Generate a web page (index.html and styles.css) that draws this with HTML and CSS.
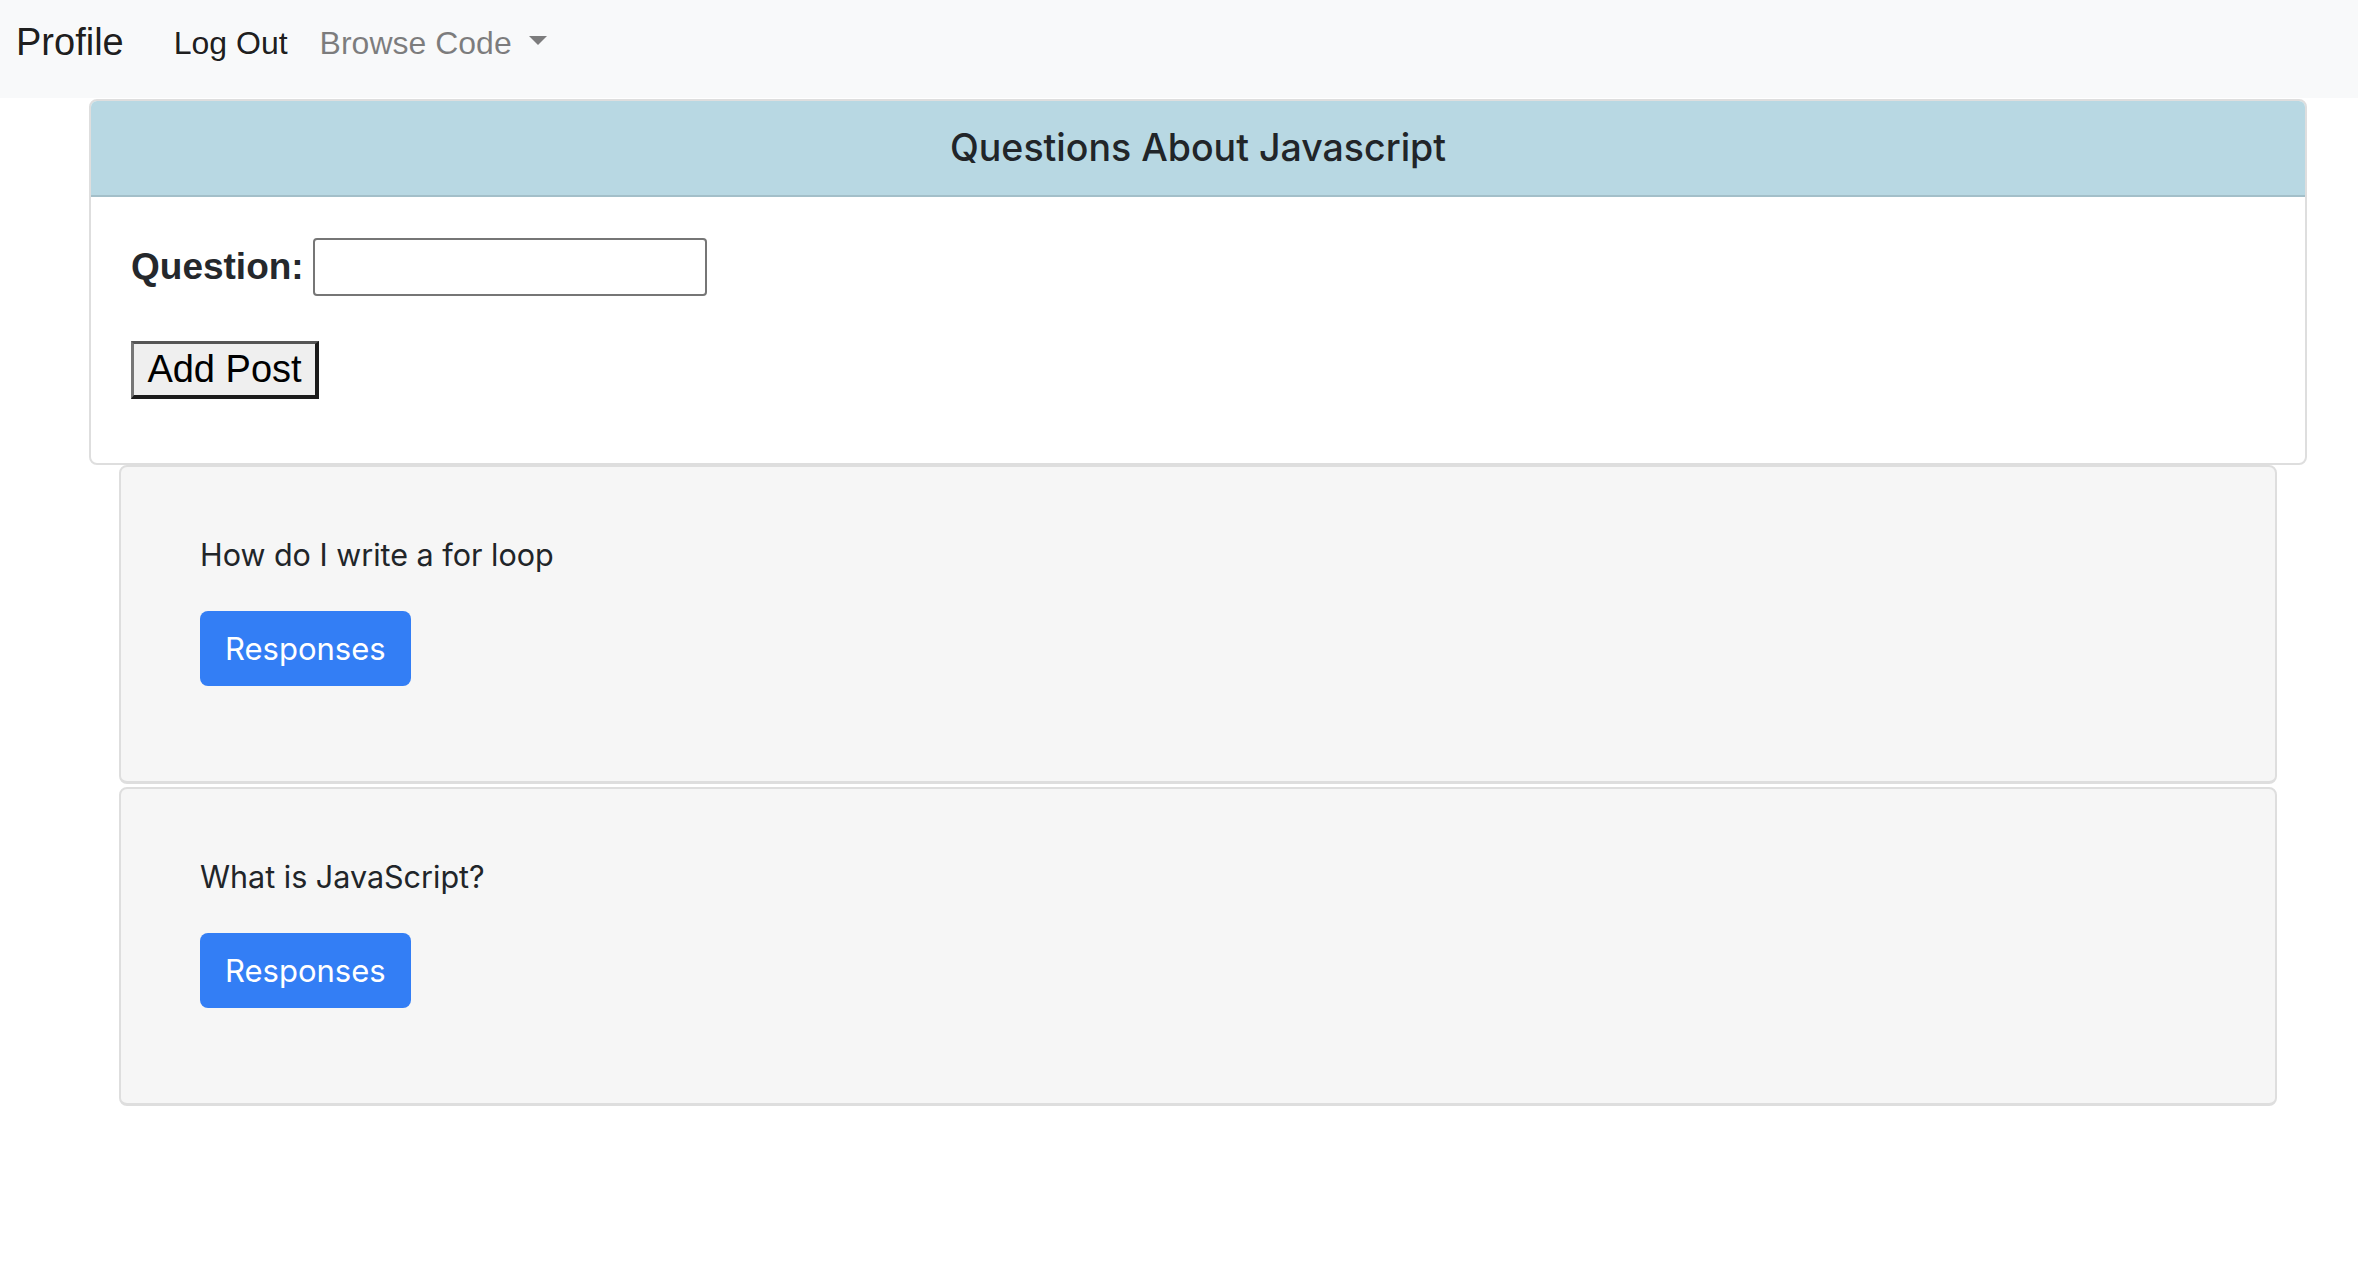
FILE: index.html
```html
<!DOCTYPE html>
<html lang="en">
<head>
<meta charset="utf-8">
<title>Questions About Javascript</title>
<link rel="stylesheet" href="styles.css">
</head>
<body>
<nav class="navbar">
  <a class="brand" href="#">Profile</a>
  <ul class="nav">
    <li><a class="nav-link nav-link-active" href="#">Log Out</a></li>
    <li><a class="nav-link nav-link-muted" href="#">Browse Code<span class="caret"></span></a></li>
  </ul>
</nav>
<main class="page">
  <section class="card">
    <div class="card-header">
      <h5 class="card-title">Questions About Javascript</h5>
    </div>
    <form class="card-body">
      <div class="field">
        <label class="field-label" for="q">Question:</label>
        <input class="field-input" id="q" type="text">
      </div>
      <button class="add-btn" type="button">Add Post</button>
    </form>
  </section>
  <div class="posts">
    <article class="post">
      <p class="post-text">How do I write a for loop</p>
      <button class="btn-primary" type="button">Responses</button>
    </article>
    <article class="post">
      <p class="post-text">What is JavaScript?</p>
      <button class="btn-primary" type="button">Responses</button>
    </article>
  </div>
</main>
</body>
</html>
```
FILE: styles.css
```css
* { box-sizing: border-box; }
html, body { margin: 0; padding: 0; background: #fff; }
body { font-family: "Inter", "Liberation Sans", sans-serif; color: #212529; }

.navbar {
  display: flex;
  align-items: center;
  height: 98px;
  padding: 0 16px 13px 16px;
  background: #f8f9fa;
}
.brand {
  font-family: "Liberation Sans", Arial, sans-serif;
  font-size: 38px;
  line-height: 57px;
  color: rgba(0,0,0,0.9);
  text-decoration: none;
  margin-right: 34px;
}
.nav { display: flex; list-style: none; margin: 0; padding: 0; }
.nav-link {
  display: flex;
  align-items: center;
  font-family: "Liberation Sans", Arial, sans-serif;
  font-size: 32px;
  line-height: 48px;
  padding: 0 16px;
  text-decoration: none;
}
.nav-link-active { color: rgba(0,0,0,0.9); }
.nav-link-muted { color: rgba(0,0,0,0.5); }
.caret {
  display: inline-block;
  margin-left: 17px;
  margin-top: -4px;
  width: 0; height: 0;
  border-top: 9px solid rgba(0,0,0,0.5);
  border-left: 9px solid transparent;
  border-right: 9px solid transparent;
}

.page { margin: 1px 0 0 89px; width: 2218px; }

.card {
  border: 2px solid #dedede;
  border-radius: 8px;
  overflow: hidden;
  background: #fff;
}
.card-header {
  background: #b8d8e3;
  border-bottom: 2px solid #a3bfc9;
  height: 96px;
  display: flex;
  align-items: center;
  justify-content: center;
}
.card-title {
  margin: 0;
  font-family: "Inter", sans-serif;
  font-weight: 500;
  font-size: 37.5px;
  line-height: 46px;
  color: #212529;
}
.card-body { padding: 41px 40px 64px 40px; }
.field { display: flex; align-items: center; }
.field-label {
  font-family: "Liberation Sans", Arial, sans-serif;
  font-weight: bold;
  font-size: 37px;
  color: #25282c;
  margin-right: 9px;
}
.field-input {
  width: 394px;
  height: 58px;
  border: 2px solid #767676;
  border-radius: 4px;
  background: #fff;
  font-size: 32px;
  padding: 2px 4px;
}
.add-btn {
  display: block;
  margin-top: 45px;
  width: 188px;
  height: 58px;
  padding: 0;
  background: #efefef;
  border-style: solid;
  border-width: 3px 4px 4px 3px;
  border-color: #555 #1b1b1b #1b1b1b #767676;
  font-family: "Liberation Sans", Arial, sans-serif;
  font-size: 38px;
  color: #000;
}

.posts { padding: 0 30px; }
.post {
  background: #f6f6f6;
  border: 2px solid #dedede;
  border-bottom-width: 3px;
  border-radius: 8px;
  padding: 64px 79px 95px 79px;
  margin-bottom: 3px;
}
.post-text {
  margin: 0 0 32px 0;
  font-size: 30.5px;
  line-height: 48px;
  color: #212529;
}
.btn-primary {
  display: inline-block;
  background: #337ef5;
  color: #fff;
  border: none;
  border-radius: 8px;
  padding: 13px 25px;
  font-family: "Inter", sans-serif;
  font-size: 31px;
  line-height: 49px;
}
```
